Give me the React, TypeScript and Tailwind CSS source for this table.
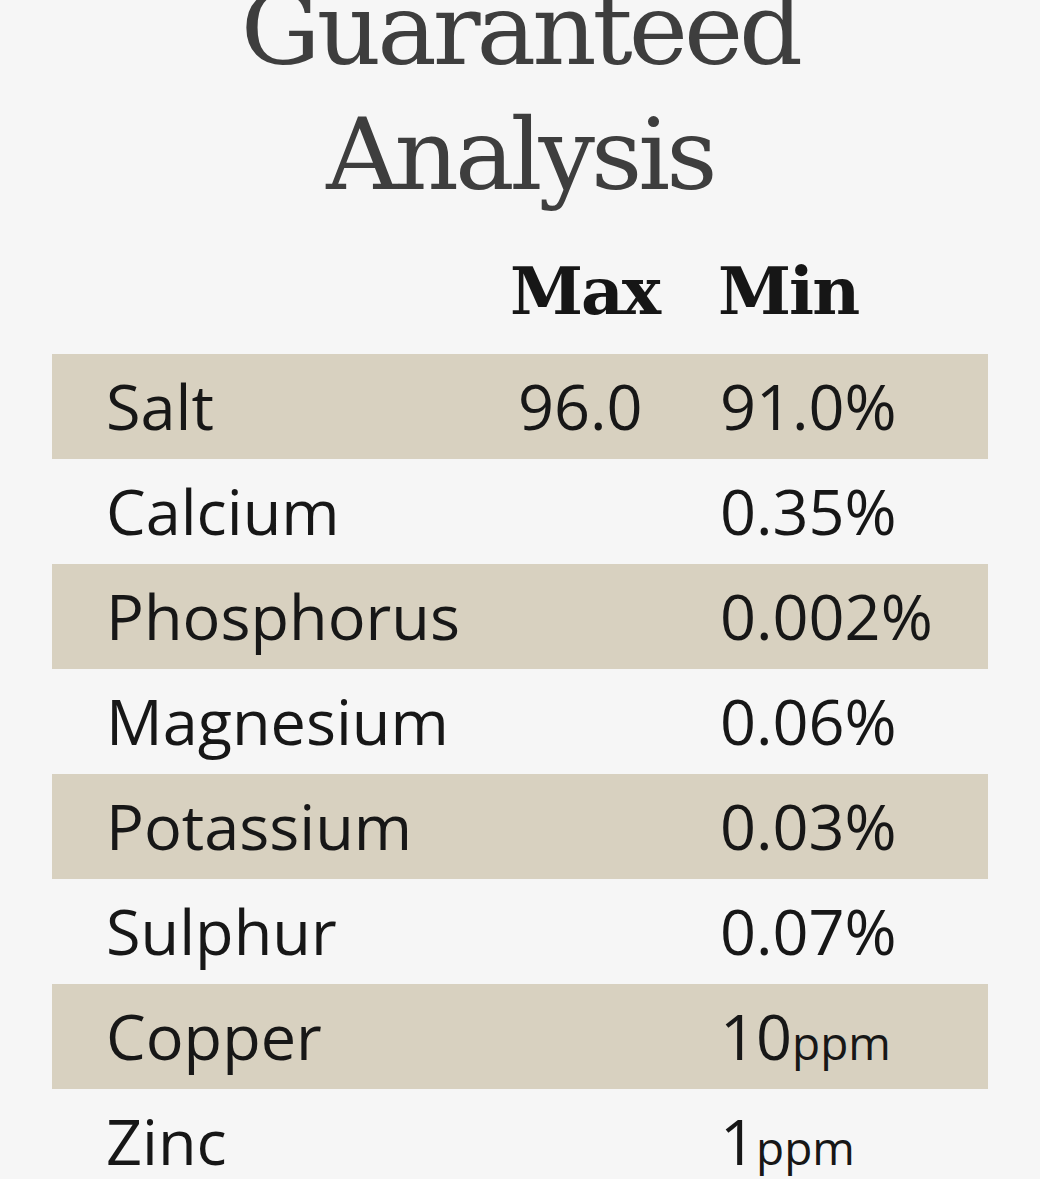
const rows = [
  { name: "Salt", max: "96.0", min: "91.0%", band: true },
  { name: "Calcium", max: "", min: "0.35%", band: false },
  { name: "Phosphorus", max: "", min: "0.002%", band: true },
  { name: "Magnesium", max: "", min: "0.06%", band: false },
  { name: "Potassium", max: "", min: "0.03%", band: true },
  { name: "Sulphur", max: "", min: "0.07%", band: false },
  { name: "Copper", max: "", min: "10", unit: "ppm", band: true },
  { name: "Zinc", max: "", min: "1", unit: "ppm", band: false },
];

export default function App() {
  return (
    <div className="h-[1179px] w-[1040px] overflow-hidden bg-[#f6f6f6]">
      <h1 className="-mt-[33px] text-center font-['DejaVu_Serif',serif] text-[100px] leading-[125px] tracking-[-4px] text-[#3e3e3e]">
        Guaranteed
        <br />
        Analysis
      </h1>
      <div className="mt-[34px] flex pl-[510px] font-['DejaVu_Serif',serif] text-[66px] font-bold leading-[80px] tracking-[-2px] text-[#161616]">
        <span className="w-[208px]">Max</span>
        <span>Min</span>
      </div>
      <div className="mt-[23px] font-['Open_Sans',sans-serif] text-[#171717]">
        {rows.map((r) => (
          <div
            key={r.name}
            className={`mx-[52px] flex h-[105px] items-center pl-[54px] text-[63px] ${r.band ? "bg-[#d8d1c0]" : ""}`}
          >
            <span className="w-[412px]">{r.name}</span>
            <span className="w-[202px]">{r.max}</span>
            <span>
              {r.min}
              {r.unit && <span className="text-[46px]">{r.unit}</span>}
            </span>
          </div>
        ))}
      </div>
    </div>
  );
}
